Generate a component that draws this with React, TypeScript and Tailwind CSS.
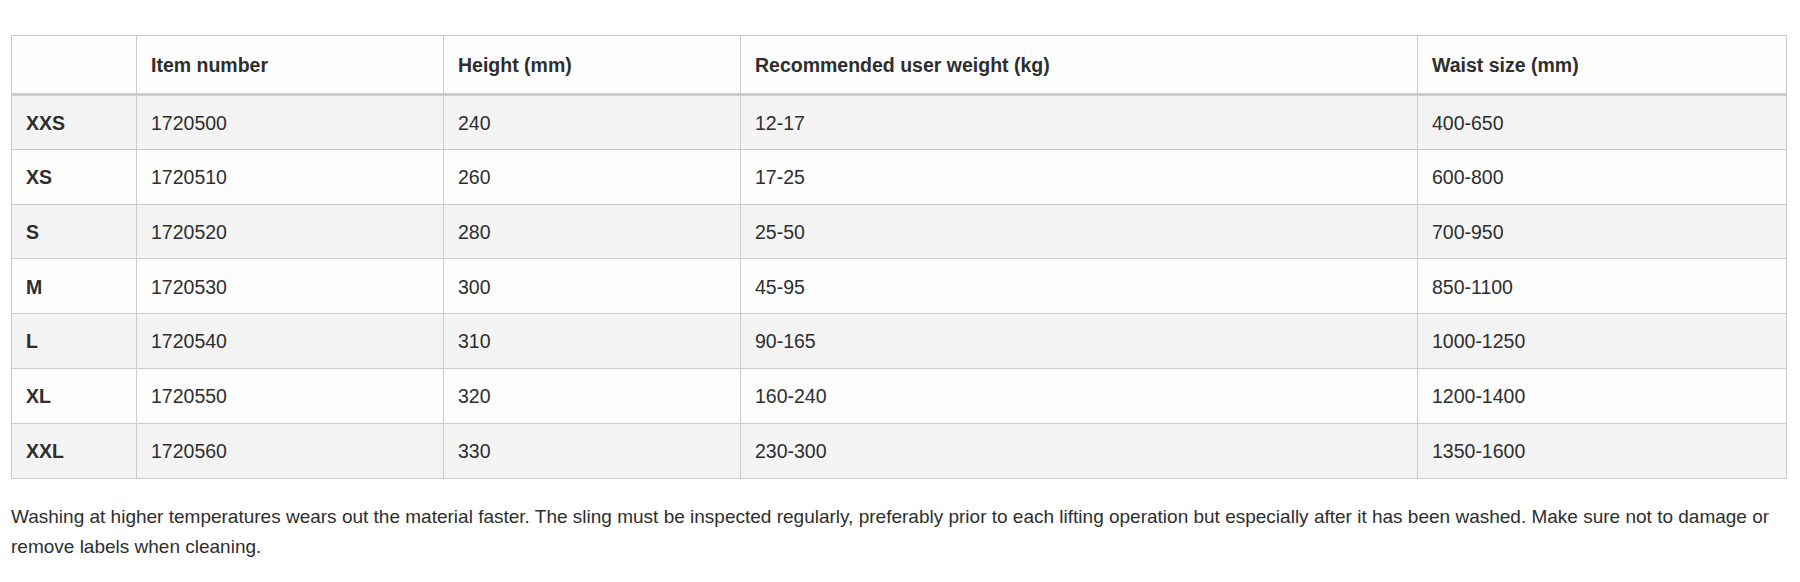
const rows = [
  ['XXS', '1720500', '240', '12-17', '400-650'],
  ['XS', '1720510', '260', '17-25', '600-800'],
  ['S', '1720520', '280', '25-50', '700-950'],
  ['M', '1720530', '300', '45-95', '850-1100'],
  ['L', '1720540', '310', '90-165', '1000-1250'],
  ['XL', '1720550', '320', '160-240', '1200-1400'],
  ['XXL', '1720560', '330', '230-300', '1350-1600'],
];

const headers = ['', 'Item number', 'Height (mm)', 'Recommended user weight (kg)', 'Waist size (mm)'];
const widths = ['w-[125px]', 'w-[307px]', 'w-[297px]', 'w-[677px]', 'w-[369px]'];

export default function App() {
  return (
    <div className="bg-white min-h-[582px] pl-[11px] pr-[14px] pt-[35px] text-[#2e2e2e] font-['Liberation_Sans',Arial,sans-serif]">
      <table className="w-[1775px] border-collapse table-fixed border border-[#cccccc]">
        <thead>
          <tr className="bg-[#fdfdfd]">
            {headers.map((h, i) => (
              <th
                key={i}
                className={`${widths[i]} h-[59px] pt-[2px] border border-[#cccccc] border-b-[3px] px-[14px] text-left text-[19.5px] font-bold`}
              >
                {h}
              </th>
            ))}
          </tr>
        </thead>
        <tbody>
          {rows.map((r, ri) => (
            <tr key={ri} className={ri % 2 === 0 ? 'bg-[#f4f4f4]' : 'bg-[#fdfdfd]'}>
              {r.map((c, ci) => (
                <td
                  key={ci}
                  className={`h-[54.8px] pt-[2px] border border-[#cccccc] px-[14px] text-[19.5px] ${ci === 0 ? 'font-bold' : ''}`}
                >
                  {c}
                </td>
              ))}
            </tr>
          ))}
        </tbody>
      </table>
      <p className="mt-[23px] text-[19px] leading-[30px]">
        Washing at higher temperatures wears out the material faster. The sling must be inspected regularly, preferably prior to each lifting operation but especially after it has been washed. Make sure not to damage or remove labels when cleaning.
      </p>
    </div>
  );
}
